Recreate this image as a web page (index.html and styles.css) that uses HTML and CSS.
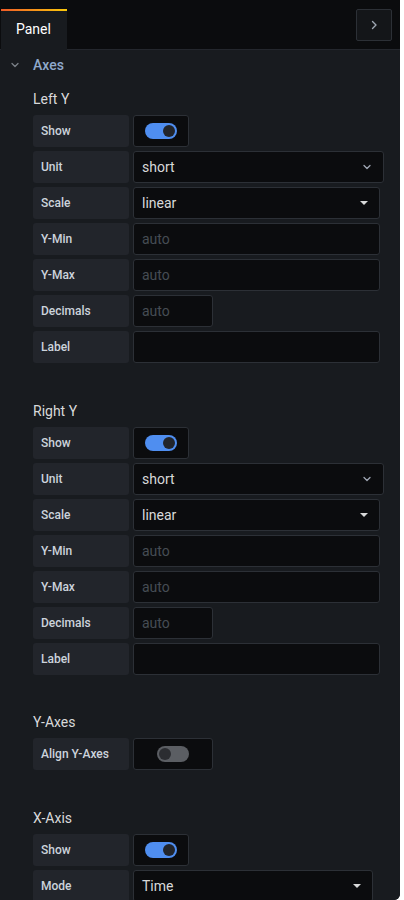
FILE: index.html
```html
<!DOCTYPE html>
<html lang="en">
<head>
<meta charset="utf-8">
<title>Panel editor - Axes</title>
<link rel="stylesheet" href="styles.css">
</head>
<body>
<div class="frame">
  <div class="tabbar">
    <div class="tab">Panel</div>
    <button class="collapse" aria-label="Collapse">
      <svg width="10" height="10" viewBox="0 0 10 10"><path d="M3.5 1.5 L7 5 L3.5 8.5" fill="none" stroke="#9fa7b3" stroke-width="1.4" stroke-linecap="round" stroke-linejoin="round"/></svg>
    </button>
  </div>
  <div class="panel">
    <div class="group-header">
      <svg class="group-chevron" width="10" height="10" viewBox="0 0 10 10"><path d="M2 3.5 L5 6.5 L8 3.5" fill="none" stroke="#7b8087" stroke-width="1.3" stroke-linecap="round" stroke-linejoin="round"/></svg>
      <span class="group-title">Axes</span>
    </div>
    <div class="group-body">
      <section class="section">
        <h3 class="section-title">Left Y</h3>
        <div class="row"><div class="label">Show</div><div class="field switch-field w56"><span class="switch on"><span class="knob"></span></span></div></div>
        <div class="row"><div class="label">Unit</div><div class="field select w251"><span class="value">short</span><svg class="chev" width="10" height="10" viewBox="0 0 10 10"><path d="M2 3.5 L5 6.5 L8 3.5" fill="none" stroke="#9fa7b3" stroke-width="1.3" stroke-linecap="round" stroke-linejoin="round"/></svg></div></div>
        <div class="row"><div class="label">Scale</div><div class="field select w247"><span class="value">linear</span><span class="caret"></span></div></div>
        <div class="row"><div class="label">Y-Min</div><div class="field w247"><span class="placeholder">auto</span></div></div>
        <div class="row"><div class="label">Y-Max</div><div class="field w247"><span class="placeholder">auto</span></div></div>
        <div class="row"><div class="label">Decimals</div><div class="field w80"><span class="placeholder">auto</span></div></div>
        <div class="row"><div class="label">Label</div><div class="field w247"></div></div>
      </section>
      <section class="section">
        <h3 class="section-title">Right Y</h3>
        <div class="row"><div class="label">Show</div><div class="field switch-field w56"><span class="switch on"><span class="knob"></span></span></div></div>
        <div class="row"><div class="label">Unit</div><div class="field select w251"><span class="value">short</span><svg class="chev" width="10" height="10" viewBox="0 0 10 10"><path d="M2 3.5 L5 6.5 L8 3.5" fill="none" stroke="#9fa7b3" stroke-width="1.3" stroke-linecap="round" stroke-linejoin="round"/></svg></div></div>
        <div class="row"><div class="label">Scale</div><div class="field select w247"><span class="value">linear</span><span class="caret"></span></div></div>
        <div class="row"><div class="label">Y-Min</div><div class="field w247"><span class="placeholder">auto</span></div></div>
        <div class="row"><div class="label">Y-Max</div><div class="field w247"><span class="placeholder">auto</span></div></div>
        <div class="row"><div class="label">Decimals</div><div class="field w80"><span class="placeholder">auto</span></div></div>
        <div class="row"><div class="label">Label</div><div class="field w247"></div></div>
      </section>
      <section class="section section-tight">
        <h3 class="section-title">Y-Axes</h3>
        <div class="row"><div class="label">Align Y-Axes</div><div class="field switch-field w80"><span class="switch"><span class="knob"></span></span></div></div>
      </section>
      <section class="section">
        <h3 class="section-title">X-Axis</h3>
        <div class="row"><div class="label">Show</div><div class="field switch-field w56"><span class="switch on"><span class="knob"></span></span></div></div>
        <div class="row"><div class="label">Mode</div><div class="field select w240"><span class="value">Time</span><span class="caret"></span></div></div>
      </section>
    </div>
  </div>
</div>
</body>
</html>
```

FILE: styles.css
```css
* { box-sizing: border-box; }

html, body {
  margin: 0;
  padding: 0;
  background: #ffffff;
  overflow: hidden;
}

body {
  font-family: Roboto, "Liberation Sans", Arial, sans-serif;
  color: #ccccdc;
}

.frame {
  width: 400px;
  height: 900px;
  background: #181b1f;
  border-bottom-right-radius: 6px;
  overflow: hidden;
  display: flex;
  flex-direction: column;
}

.tabbar {
  height: 50px;
  flex: none;
  background: #0b0c0e;
  border-bottom: 1px solid #24272d;
  display: flex;
  align-items: flex-start;
  padding: 9px 8px 0 1px;
}

.tab {
  height: 41px;
  padding: 0 15px;
  background: #181b1f;
  border-top: 2px solid transparent;
  border-image: linear-gradient(90deg, #f05a28, #fbca0a) 1;
  border-image-width: 2px 0 0 0;
  border-right: 1px solid #24272d;
  color: #ffffff;
  font-size: 14px;
  line-height: 37px;
  position: relative;
  z-index: 1;
}

.collapse {
  margin-left: auto;
  width: 36px;
  height: 32px;
  padding: 0;
  background: #141619;
  border: 1px solid #2c3036;
  border-radius: 2px;
  display: flex;
  align-items: center;
  justify-content: center;
}

.panel {
  flex: 1;
  background: #181b1f;
}

.group-header {
  height: 30px;
  display: flex;
  align-items: center;
  padding-left: 10px;
}

.group-chevron {
  margin-right: 13px;
}

.group-title {
  color: #8fa9cc;
  font-size: 14px;
  font-weight: 500;
}

.group-body {
  padding: 10px 0 0 33px;
  display: flex;
  flex-direction: column;
  gap: 39px;
}

.section {
  display: flex;
  flex-direction: column;
  gap: 4px;
}

.section-tight {
  margin-top: -1px;
}

.section-title {
  margin: 0 0 3px;
  height: 18px;
  line-height: 18px;
  font-size: 14px;
  font-weight: 400;
  color: #d8d9da;
}

.row {
  display: flex;
  gap: 4px;
  height: 32px;
}

.label {
  width: 96px;
  height: 32px;
  background: #22252b;
  border-radius: 3px;
  padding-left: 8px;
  display: flex;
  align-items: center;
  font-size: 12px;
  font-weight: 500;
  color: #ccd3dc;
  white-space: nowrap;
}

.field {
  height: 32px;
  background: #0b0c0e;
  border: 1px solid #2c3036;
  border-radius: 3px;
  display: flex;
  align-items: center;
  padding: 0 8px;
  font-size: 14px;
}

.w56 { width: 56px; }
.w80 { width: 80px; }
.w240 { width: 240px; }
.w247 { width: 247px; }
.w251 { width: 251px; }

.value { color: #d8d9da; }

.placeholder { color: #464c54; }

.select { justify-content: space-between; padding-right: 10px; }

.chev { margin-right: 1px; }

.caret {
  width: 0;
  height: 0;
  border-left: 4px solid transparent;
  border-right: 4px solid transparent;
  border-top: 4px solid #d8d9da;
  margin-right: 1px;
}

.switch-field { justify-content: center; padding: 0; }

.switch {
  width: 32px;
  height: 16px;
  border-radius: 8px;
  background: #5b5e63;
  position: relative;
  display: block;
}

.switch .knob {
  position: absolute;
  top: 2px;
  left: 2px;
  width: 12px;
  height: 12px;
  border-radius: 50%;
  background: #2b2d31;
}

.switch.on { background: #4f8ef0; }

.switch.on .knob {
  left: 18px;
  background: #22252b;
}
```
